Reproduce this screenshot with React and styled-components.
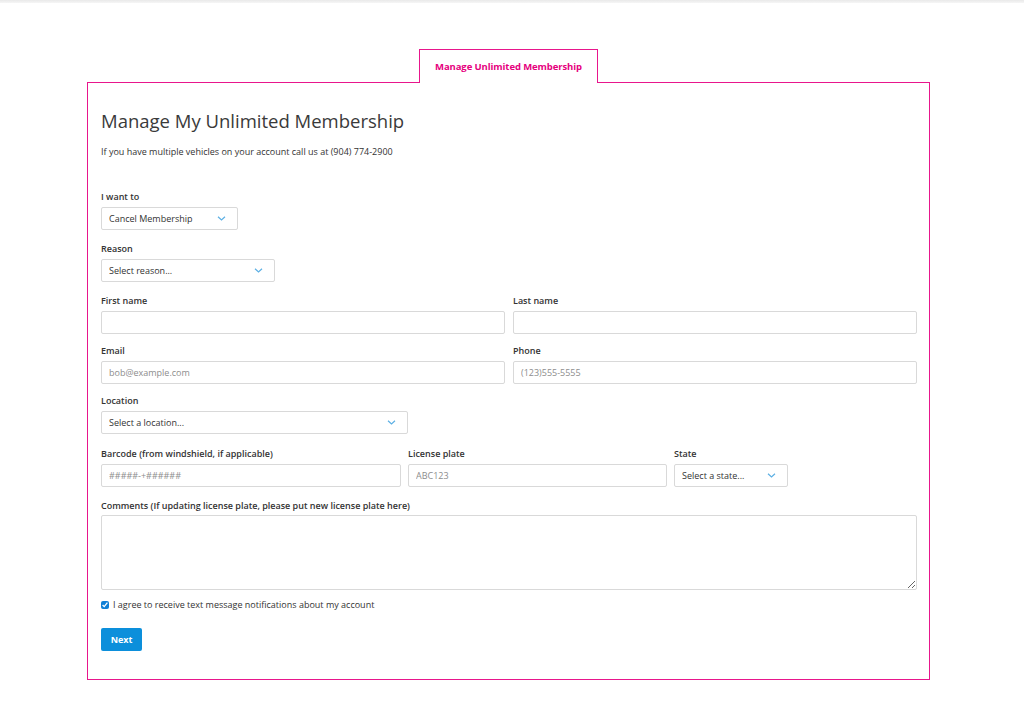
import React from "react";
import styled, { createGlobalStyle } from "styled-components";

const GlobalStyle = createGlobalStyle`
  html, body {
    margin: 0;
    padding: 0;
    background: #ffffff;
    font-family: "Open Sans", "Noto Sans", Arial, sans-serif;
    color: #333333;
  }
`;

const PINK = "#e8168c";

const TopStrip = styled.div`
  height: 3px;
  background: linear-gradient(#e9e9e9, #f6f6f6);
`;

const Page = styled.div`
  padding: 46px 94px 40px 87px;
`;

const TabRow = styled.div`
  display: flex;
  justify-content: center;
`;

const Tab = styled.div`
  width: 177px;
  height: 33px;
  border: 1px solid ${PINK};
  border-bottom: none;
  background: #fff;
  margin-bottom: -1px;
  position: relative;
  z-index: 1;
  display: flex;
  align-items: center;
  justify-content: center;
  font-size: 9.5px;
  font-weight: 700;
  color: #e6007e;
  letter-spacing: -0.1px;
`;

const Panel = styled.div`
  border: 1px solid ${PINK};
  padding: 24px 12px 28px 13px;
`;

const Title = styled.h1`
  margin: 0;
  font-size: 18.5px;
  line-height: 28px;
  font-weight: 400;
  color: #3a3a3a;
`;

const Subtitle = styled.p`
  margin: 10px 0 32px;
  font-size: 9px;
  line-height: 14px;
  color: #333;
`;

const Row = styled.div`
  display: grid;
  grid-template-columns: ${(p) => p.$cols || "1fr"};
  column-gap: ${(p) => p.$gap || 8}px;
  margin-bottom: ${(p) => (p.$mb != null ? p.$mb : 13)}px;
`;

const Group = styled.div`
  display: flex;
  flex-direction: column;
  margin-bottom: ${(p) => (p.$mb != null ? p.$mb : 13)}px;
`;

const Label = styled.label`
  font-size: 9px;
  line-height: 12px;
  font-weight: 600;
  color: #333;
  margin-bottom: ${(p) => (p.$mb != null ? p.$mb : 4)}px;
`;

const Input = styled.input`
  box-sizing: border-box;
  display: block;
  height: 23px;
  width: 100%;
  border: 1px solid #d9d9d9;
  border-radius: 2px;
  padding: 0 7px;
  font-family: inherit;
  font-size: 9px;
  color: #333;
  outline: none;
  &::placeholder {
    color: #8d8d8d;
  }
`;

const SelectWrap = styled.div`
  position: relative;
  width: ${(p) => p.$w}px;
`;

const Select = styled.select`
  appearance: none;
  display: block;
  box-sizing: border-box;
  height: 23px;
  width: 100%;
  border: 1px solid #d9d9d9;
  border-radius: 2px;
  padding: 0 7px;
  background: #fff;
  font-family: inherit;
  font-size: 9px;
  color: #333;
  outline: none;
`;

const Chevron = styled.svg`
  position: absolute;
  right: 12px;
  top: 9px;
  pointer-events: none;
`;

const TextArea = styled.textarea`
  box-sizing: border-box;
  display: block;
  height: 75px;
  width: 100%;
  border: 1px solid #d9d9d9;
  border-radius: 2px;
  font-family: inherit;
  outline: none;
`;

const CheckRow = styled.label`
  display: flex;
  align-items: center;
  gap: 4px;
  font-size: 9px;
  line-height: 12px;
  color: #333;
`;

const Check = styled.input`
  width: 8px;
  height: 8px;
  margin: 0;
  accent-color: #0f7fd6;
`;

const Button = styled.button`
  display: block;
  margin-top: 17px;
  width: 41px;
  height: 23px;
  border: none;
  border-radius: 2px;
  background: #0c8fdb;
  color: #fff;
  font-family: inherit;
  font-size: 9px;
  font-weight: 700;
  cursor: pointer;
`;

const Dropdown = ({ w, children }) => (
  <SelectWrap $w={w}>
    <Select defaultValue="0">{children}</Select>
    <Chevron width="9" height="5" viewBox="0 0 9 5">
      <path d="M1 0.8 L4.5 4 L8 0.8" fill="none" stroke="#5db0e4" strokeWidth="1.2" />
    </Chevron>
  </SelectWrap>
);

export default function App() {
  return (
    <>
      <GlobalStyle />
      <TopStrip />
      <Page>
        <TabRow>
          <Tab>Manage Unlimited Membership</Tab>
        </TabRow>
        <Panel>
          <Title>Manage My Unlimited Membership</Title>
          <Subtitle>If you have multiple vehicles on your account call us at (904) 774-2900</Subtitle>

          <Group>
            <Label>I want to</Label>
            <Dropdown w={137}>
              <option value="0">Cancel Membership</option>
            </Dropdown>
          </Group>

          <Group>
            <Label>Reason</Label>
            <Dropdown w={174}>
              <option value="0">Select reason...</option>
            </Dropdown>
          </Group>

          <Row $cols="1fr 1fr" $mb={11}>
            <Group $mb={0}>
              <Label>First name</Label>
              <Input />
            </Group>
            <Group $mb={0}>
              <Label>Last name</Label>
              <Input />
            </Group>
          </Row>

          <Row $cols="1fr 1fr" $mb={11}>
            <Group $mb={0}>
              <Label>Email</Label>
              <Input placeholder="bob@example.com" />
            </Group>
            <Group $mb={0}>
              <Label>Phone</Label>
              <Input placeholder="(123)555-5555" />
            </Group>
          </Row>

          <Group $mb={14}>
            <Label>Location</Label>
            <Dropdown w={307}>
              <option value="0">Select a location...</option>
            </Dropdown>
          </Group>

          <Row $cols="300px 259px 114px" $gap={7}>
            <Group $mb={0}>
              <Label>Barcode (from windshield, if applicable)</Label>
              <Input placeholder="#####-+######" />
            </Group>
            <Group $mb={0}>
              <Label>License plate</Label>
              <Input placeholder="ABC123" />
            </Group>
            <Group $mb={0}>
              <Label>State</Label>
              <Dropdown w={114}>
                <option value="0">Select a state...</option>
              </Dropdown>
            </Group>
          </Row>

          <Group $mb={9}>
            <Label $mb={3}>Comments (If updating license plate, please put new license plate here)</Label>
            <TextArea />
          </Group>

          <CheckRow>
            <Check type="checkbox" defaultChecked />
            I agree to receive text message notifications about my account
          </CheckRow>

          <Button>Next</Button>
        </Panel>
      </Page>
    </>
  );
}
